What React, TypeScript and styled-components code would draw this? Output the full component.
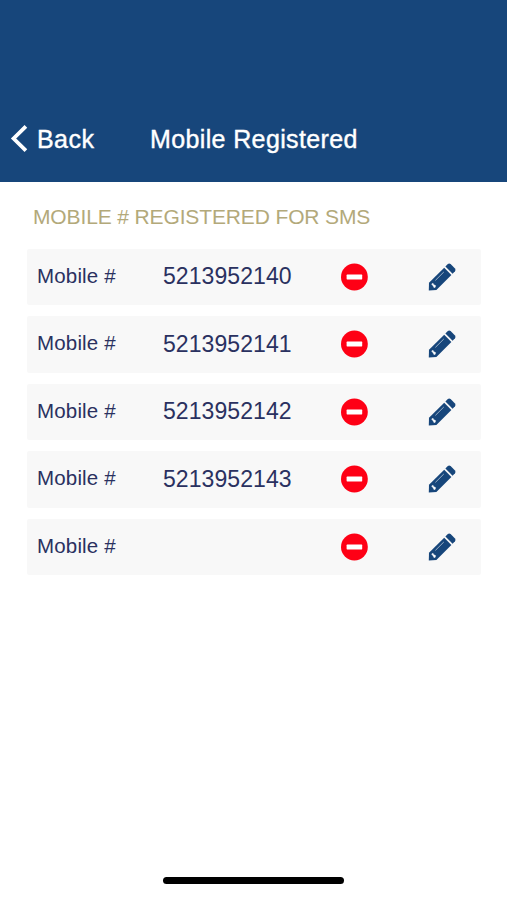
import React from "react";
import styled, { createGlobalStyle } from "styled-components";

const GlobalStyle = createGlobalStyle`
  * { box-sizing: border-box; }
  body {
    margin: 0;
    background: #fff;
    font-family: "Liberation Sans", Arial, sans-serif;
  }
`;

const Screen = styled.div`
  display: flex;
  flex-direction: column;
  width: 507px;
  height: 900px;
  overflow: hidden;
  background: #fff;
`;

const Header = styled.header`
  display: flex;
  align-items: flex-end;
  height: 182px;
  padding: 0 0 27px 10px;
  background: #17467b;
  color: #fff;
`;

const BackButton = styled.button`
  display: flex;
  align-items: center;
  width: 140px;
  height: 32px;
  padding: 0;
  border: 0;
  background: none;
  color: inherit;
  font: inherit;
  text-align: left;
`;

const BarText = styled.span<{ $spacing: number }>`
  font-size: 25px;
  font-weight: 400;
  line-height: 32px;
  letter-spacing: ${(p) => p.$spacing}px;
  white-space: nowrap;
  -webkit-text-stroke: 0.4px #fff;
`;

const Chevron = styled.svg`
  width: 18px;
  height: 30px;
  margin-right: 9px;
`;

const Content = styled.main`
  flex: 1;
  padding: 20px 26px 0 27px;
`;

const SectionTitle = styled.h2`
  height: 29px;
  margin: 0 0 17.5px 6px;
  color: #b3a97a;
  font-size: 21px;
  font-weight: 400;
  line-height: 29px;
  letter-spacing: -0.13px;
  white-space: nowrap;
`;

const List = styled.ul`
  display: flex;
  flex-direction: column;
  gap: 11px;
  margin: 0;
  padding: 0;
  list-style: none;
`;

const Row = styled.li`
  display: grid;
  grid-template-columns: 126px 177px 88px 1fr;
  align-items: center;
  height: 56.5px;
  padding-left: 10px;
  border-radius: 2px;
  background: #f8f8f8;
  color: #2a3160;
`;

const Label = styled.span`
  padding-bottom: 2px;
  font-size: 20.5px;
  line-height: 28px;
  letter-spacing: 0.17px;
`;

const PhoneNumber = styled.span`
  padding-bottom: 1px;
  font-size: 23px;
  line-height: 28px;
  letter-spacing: 0.07px;
`;

const IconButton = styled.button`
  display: flex;
  width: 28px;
  height: 28px;
  padding: 0;
  border: 0;
  background: none;
`;

const Footer = styled.footer`
  display: flex;
  justify-content: center;
  height: 23px;
`;

const HomeIndicator = styled.div`
  width: 181px;
  height: 7px;
  border-radius: 4px;
  background: #000;
`;

const RemoveIcon = () => (
  <svg width="28" height="28" viewBox="0 0 28 28">
    <circle cx="14.4" cy="14" r="13.4" fill="#fe0015" />
    <rect x="6.6" y="11.6" width="15.6" height="4.8" rx="0.6" fill="#fff" />
  </svg>
);

const PencilIcon = () => (
  <svg width="28" height="28" viewBox="0 0 28 28">
    <path
      d="M17.4 3.6 L19.8 1.1 Q21.2 0 22.6 1.1 L27 5.5 Q28 7 27 8.2 L24.6 10.8 Z"
      fill="#17467b"
    />
    <path d="M16.2 4.7 L23.4 11.9 L8.4 26.9 L.8 27.4 L1 19.8 Z" fill="#17467b" />
    <path d="M7.4 17.4 L15.8 9" stroke="#a9bccf" strokeWidth="0.9" />
    <path
      d="M3.6 21 L5 20.2 L5.8 21.7 L7.6 22.5 L7.3 24.2 L6 24.7 L5.2 23.1 Z"
      fill="#fff"
      stroke="#fff"
      strokeWidth="0.4"
    />
  </svg>
);

const numbers = ["5213952140", "5213952141", "5213952142", "5213952143", ""];

export default function App() {
  return (
    <>
      <GlobalStyle />
      <Screen>
        <Header>
          <BackButton>
            <Chevron viewBox="0 0 18 30" fill="none">
              <path d="M15.9 2.3 L3.6 14.5 L15.9 26.7" stroke="#fff" strokeWidth="3.8" />
            </Chevron>
            <BarText $spacing={0.45}>Back</BarText>
          </BackButton>
          <BarText $spacing={0.37}>Mobile Registered</BarText>
        </Header>
        <Content>
          <SectionTitle>MOBILE # REGISTERED FOR SMS</SectionTitle>
          <List>
            {numbers.map((number, i) => (
              <Row key={i}>
                <Label>Mobile #</Label>
                <PhoneNumber>{number}</PhoneNumber>
                <IconButton aria-label="Remove number">
                  <RemoveIcon />
                </IconButton>
                <IconButton aria-label="Edit number">
                  <PencilIcon />
                </IconButton>
              </Row>
            ))}
          </List>
        </Content>
        <Footer>
          <HomeIndicator />
        </Footer>
      </Screen>
    </>
  );
}
